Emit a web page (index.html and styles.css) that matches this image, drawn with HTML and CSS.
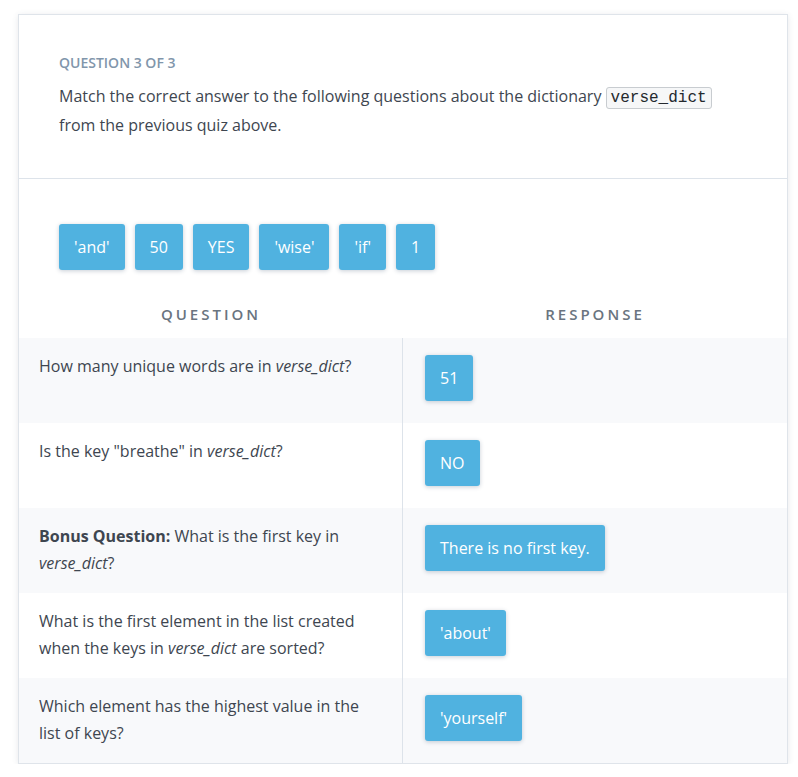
FILE: index.html
```html
<!DOCTYPE html>
<html>
<head>
<meta charset="utf-8">
<link rel="stylesheet" href="styles.css">
</head>
<body>
<div class="card">
  <div class="head">
    <div class="label">Question 3 of 3</div>
    <p class="prompt">Match the correct answer to the following questions about the dictionary <code class="code">verse_dict</code> from the previous quiz above.</p>
  </div>
  <div class="bank">
    <span class="chip">'and'</span>
    <span class="chip">50</span>
    <span class="chip">YES</span>
    <span class="chip">'wise'</span>
    <span class="chip">'if'</span>
    <span class="chip">1</span>
  </div>
  <div class="table">
    <div class="th">Question</div>
    <div class="th">Response</div>

    <div class="q odd">How many unique words are in <em>verse_dict</em>?</div>
    <div class="r odd"><span class="chip">51</span></div>

    <div class="q">Is the key "breathe" in <em>verse_dict</em>?</div>
    <div class="r"><span class="chip">NO</span></div>

    <div class="q odd"><strong>Bonus Question:</strong> What is the first key in <em>verse_dict</em>?</div>
    <div class="r odd"><span class="chip">There is no first key.</span></div>

    <div class="q">What is the first element in the list created when the keys in <em>verse_dict</em> are sorted?</div>
    <div class="r"><span class="chip">'about'</span></div>

    <div class="q odd">Which element has the highest value in the list of keys?</div>
    <div class="r odd"><span class="chip">'yourself'</span></div>
  </div>
</div>
</body>
</html>
```
FILE: styles.css
```css
html, body {
  margin: 0;
  padding: 0;
  background: #ffffff;
}
body {
  font-family: "Open Sans", "Noto Sans", sans-serif;
  color: #3e4650;
  font-size: 16px;
}
.card {
  margin: 14px 0 0 18px;
  width: 768px;
  border: 1px solid #dfe4ea;
  box-shadow: 0 1px 6px rgba(60, 70, 90, 0.12);
  background: #fff;
}
.head {
  padding: 38px 60px 39px 40px;
  border-bottom: 1px solid #dde3ea;
}
.label {
  font-size: 14px;
  font-weight: 600;
  line-height: 20px;
  text-transform: uppercase;
  color: #8196ab;
}
.prompt {
  margin: 10px 0 0;
  line-height: 27px;
  color: #3e4650;
}
.code {
  font-family: "Liberation Mono", "DejaVu Sans Mono", monospace;
  font-size: 16px;
  background: #f6f7f8;
  border: 1px solid #c8ccd0;
  border-radius: 3px;
  padding: 1px 4px;
  color: #24292e;
}
.bank {
  display: flex;
  gap: 10px;
  padding: 45px 40px 20px;
}
.chip {
  display: inline-block;
  background: #50b2e0;
  color: #ffffff;
  font-size: 16px;
  line-height: 24px;
  padding: 11px 15px;
  border-radius: 3px;
  box-shadow: 0 1px 4px rgba(30, 60, 90, 0.25);
}
.table {
  display: grid;
  grid-template-columns: 384px 384px;
}
.th {
  height: 48px;
  display: flex;
  align-items: center;
  justify-content: center;
  font-size: 15px;
  font-weight: 600;
  text-transform: uppercase;
  letter-spacing: 3px;
  color: #6a7480;
}
.q {
  height: 85px;
  box-sizing: border-box;
  padding: 15px 20px 0;
  line-height: 27px;
  border-right: 1px solid #dde3ea;
}
.r {
  height: 85px;
  box-sizing: border-box;
  padding: 17px 22px 0;
}
.odd {
  background: #f8f9fb;
}
.q strong {
  font-weight: 700;
}
```
